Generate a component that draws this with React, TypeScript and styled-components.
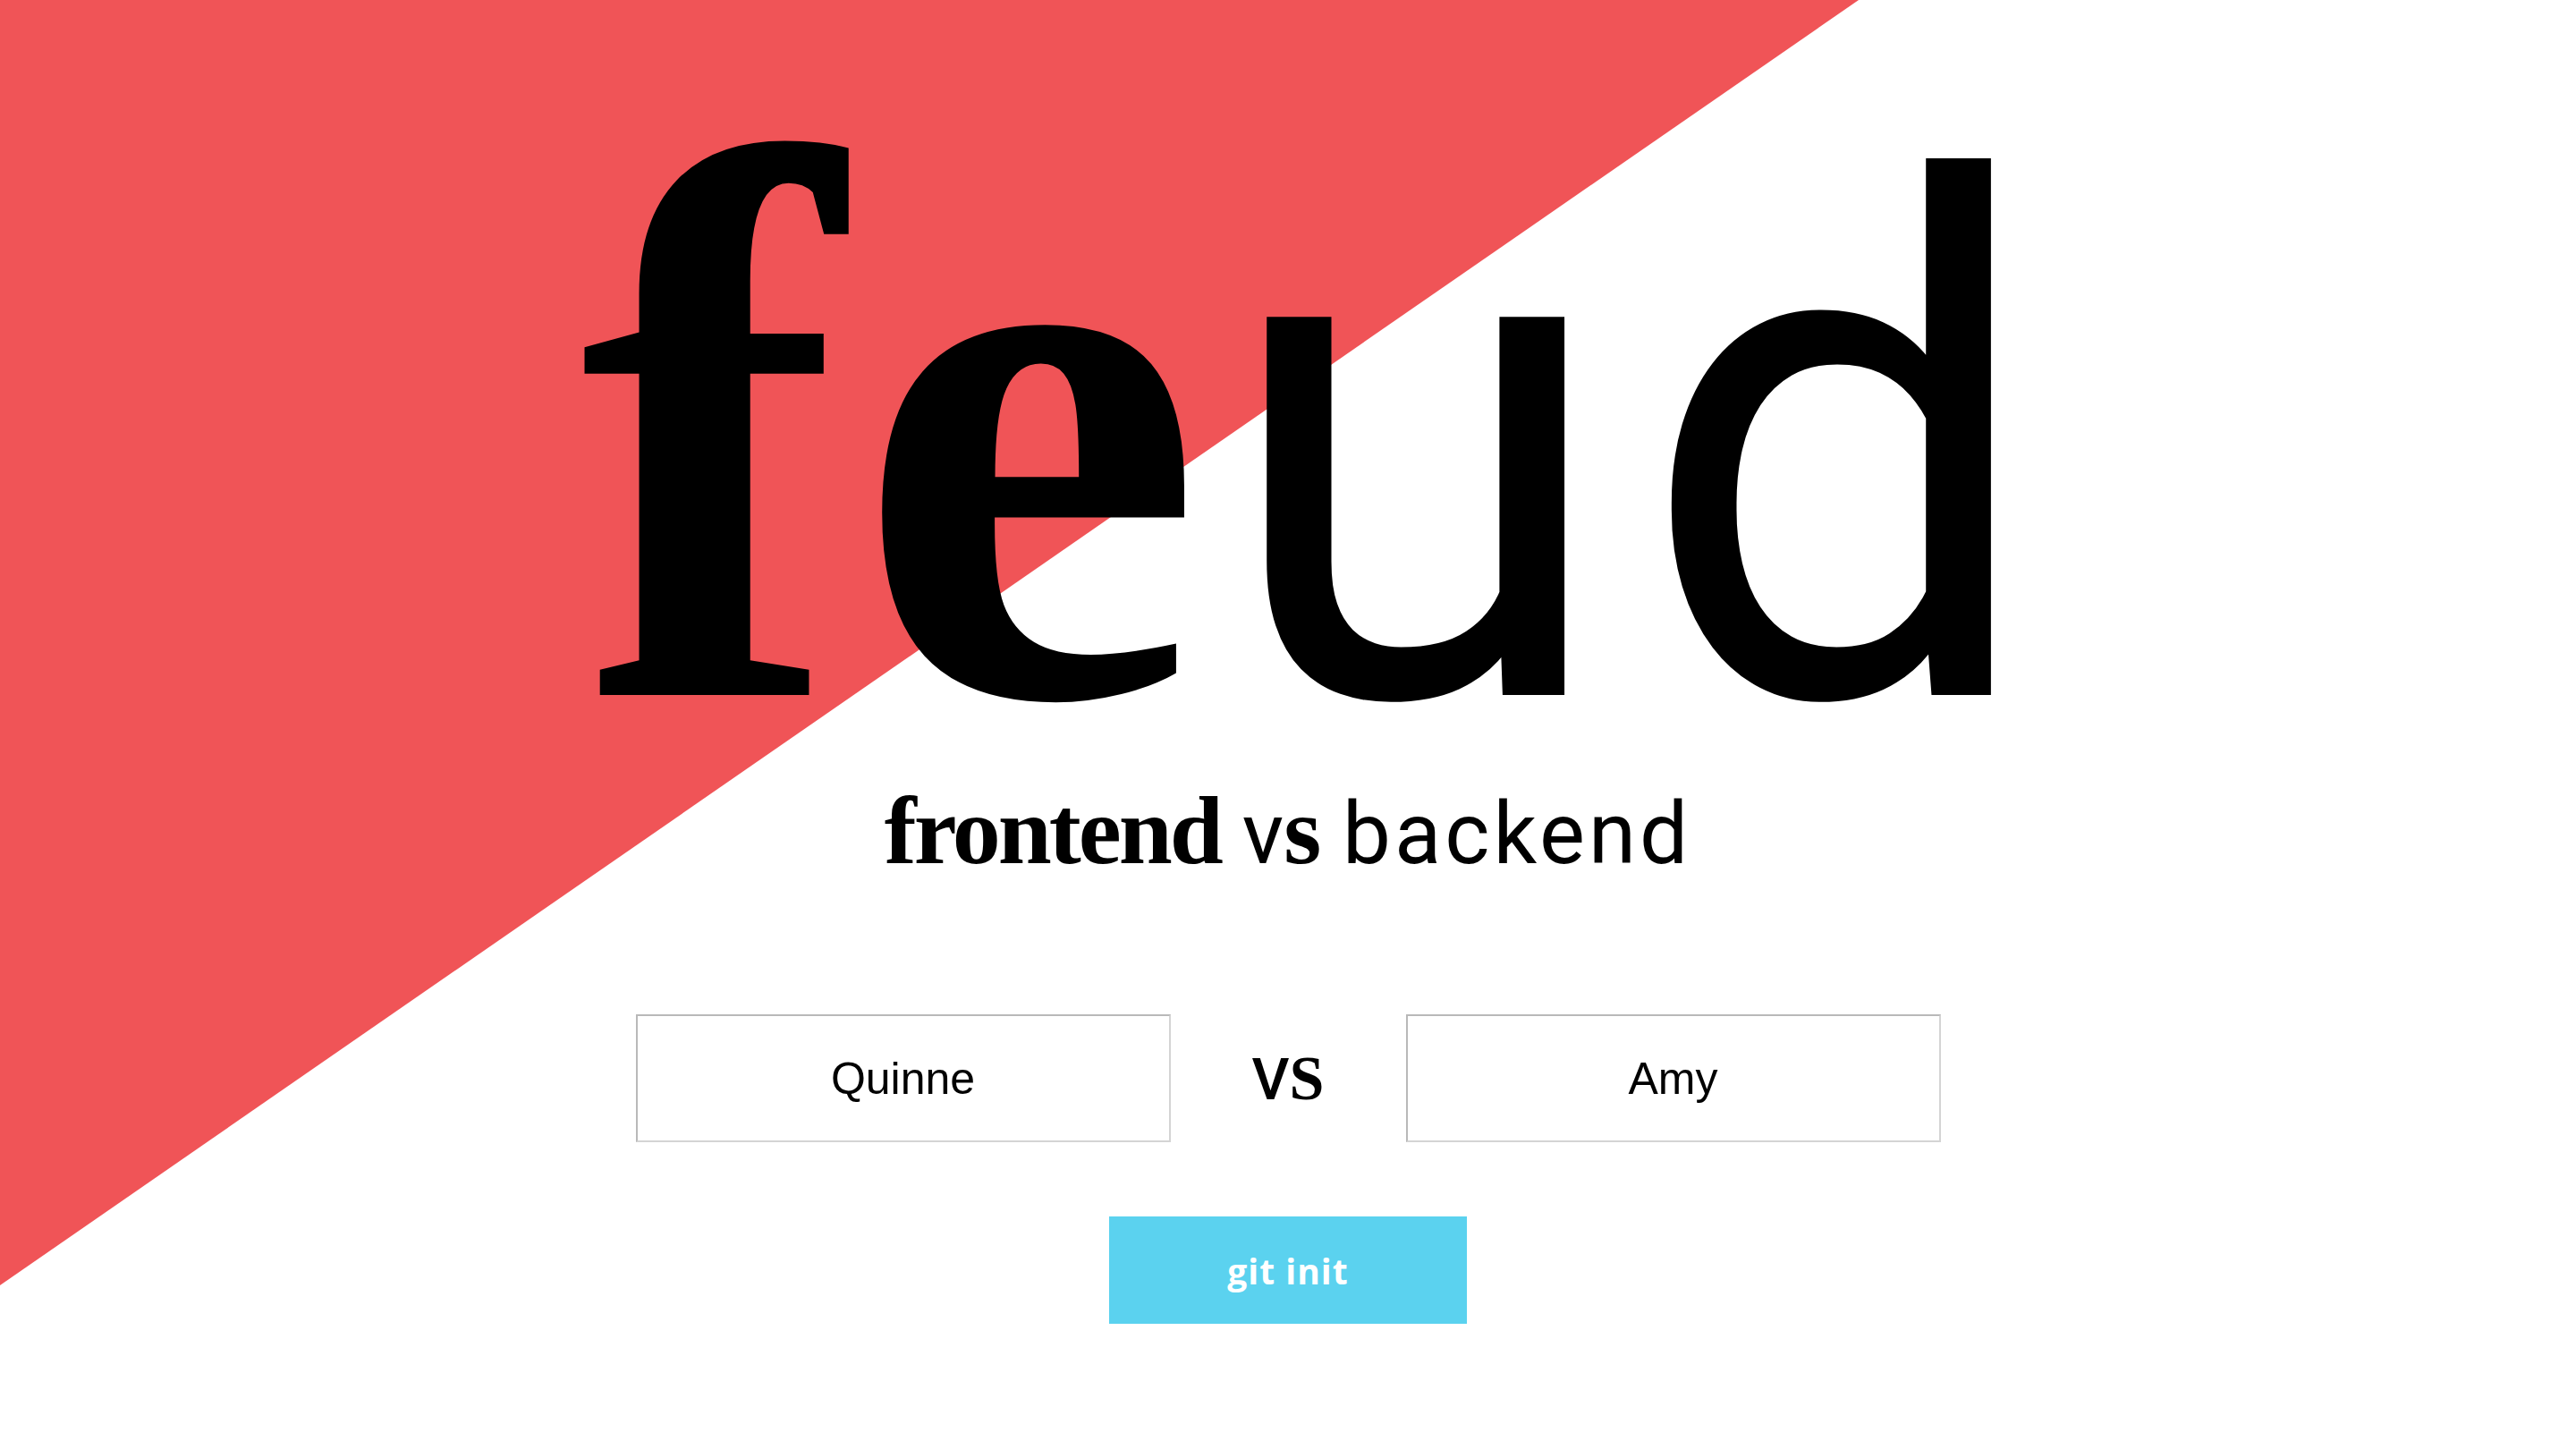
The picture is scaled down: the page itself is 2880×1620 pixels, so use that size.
import React from "react";
import styled, { createGlobalStyle } from "styled-components";

const GlobalStyle = createGlobalStyle`
  html, body {
    margin: 0;
    padding: 0;
    background: #ffffff;
  }
  body {
    font-family: "Liberation Sans", Arial, sans-serif;
    overflow: hidden;
  }
  * { box-sizing: border-box; }
`;

const Page = styled.main`
  position: relative;
  width: 100vw;
  height: 100vh;
  min-height: 1620px;
  background: #ffffff;
  overflow: hidden;
  display: flex;
  flex-direction: column;
  align-items: center;
  padding-top: 160px;

  &::before {
    content: "";
    position: absolute;
    inset: 0;
    background: #f05457;
    clip-path: polygon(0 0, 2078px 0, 0 1437px);
    z-index: 0;
  }

  & > * {
    position: relative;
    z-index: 1;
  }
`;

const Title = styled.h1`
  margin: 0 0 0 78px;
  font-family: Roboto, "Liberation Sans", sans-serif;
  font-weight: 400;
  font-size: 800px;
  line-height: 640px;
  letter-spacing: 28px;
  color: #000;
  white-space: nowrap;
  text-align: center;
`;

const Fat = styled.span<{ $size?: number; $spacing?: number }>`
  font-family: "Liberation Serif", "Times New Roman", serif;
  font-weight: 700;
  font-size: ${(p) => (p.$size ? `${p.$size}px` : "1em")};
  letter-spacing: ${(p) => (p.$spacing ? `${p.$spacing}px` : "0")};
`;

const Subtitle = styled.h2`
  margin: 45px 0 0;
  font-family: Roboto, "Liberation Sans", sans-serif;
  font-weight: 400;
  font-size: 96px;
  line-height: 120px;
  color: #000;
  white-space: nowrap;
`;

const Spaced = styled.span`
  letter-spacing: 4px;
`;

const Players = styled.div`
  margin-top: 142px;
  display: grid;
  grid-template-columns: 598px 263px 598px;
  align-items: center;
`;

const NameInput = styled.input`
  width: 598px;
  height: 143px;
  border-style: solid;
  border-width: 2px;
  border-color: #b9b9b9 #d4d4d4 #d4d4d4 #b9b9b9;
  background: #ffffff;
  font-family: "Liberation Sans", Arial, sans-serif;
  font-size: 50px;
  color: #000;
  text-align: center;
  padding: 0;
  outline: none;
`;

const Versus = styled.div`
  text-align: center;
  font-family: Roboto, "Liberation Sans", sans-serif;
  font-weight: 500;
  font-size: 65px;
  line-height: 1;
  color: #000;
`;

const InitButton = styled.button`
  margin-top: 83px;
  width: 400px;
  height: 120px;
  border: none;
  background: #5bd2ef;
  color: #ffffff;
  font-family: "Open Sans", "Noto Sans", sans-serif;
  font-weight: 700;
  font-size: 39px;
  letter-spacing: 1px;
  cursor: pointer;
  padding: 0;
`;

export default function App() {
  return (
    <>
      <GlobalStyle />
      <Page>
        <Title>
          <Fat $size={880} $spacing={16}>
            fe
          </Fat>
          ud
        </Title>
        <Subtitle>
          <Fat $size={108} $spacing={-3}>
            frontend
          </Fat>{" "}
          v<Fat $size={108}>s</Fat> <Spaced>backend</Spaced>
        </Subtitle>
        <Players>
          <NameInput defaultValue="Quinne" aria-label="Frontend player" />
          <Versus>
            V<Fat $size={70}>S</Fat>
          </Versus>
          <NameInput defaultValue="Amy" aria-label="Backend player" />
        </Players>
        <InitButton type="button">git init</InitButton>
      </Page>
    </>
  );
}
